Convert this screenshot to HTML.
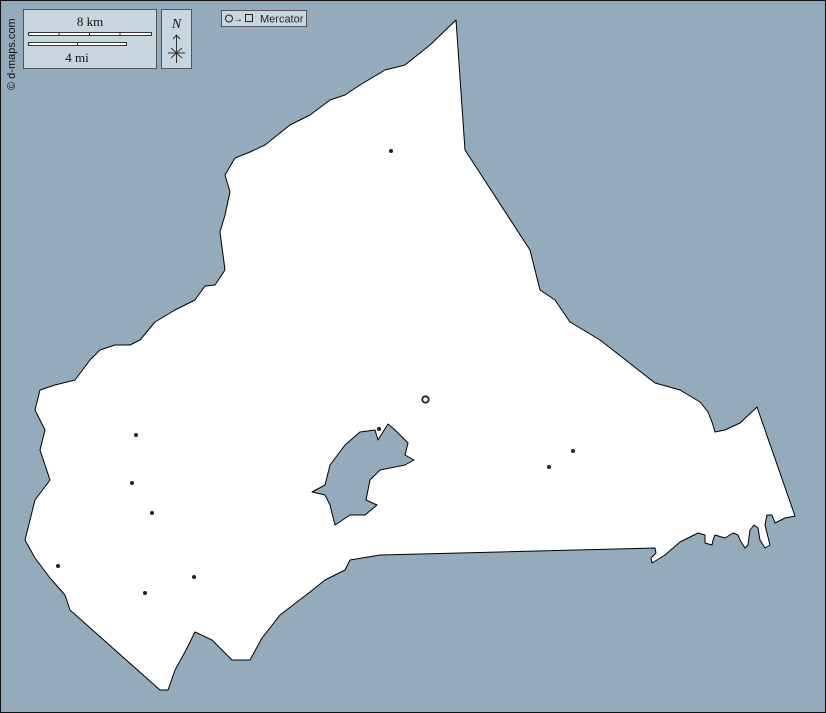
<!DOCTYPE html>
<html><head><meta charset="utf-8"><style>
html,body{margin:0;padding:0;width:826px;height:713px;overflow:hidden;background:#94abbb}
svg{display:block}
</style></head><body>
<svg width="826" height="713" viewBox="0 0 826 713" xmlns="http://www.w3.org/2000/svg">
<rect x="0.5" y="0.5" width="825" height="712" fill="#94abbb" stroke="#111" stroke-width="1"/>
<path fill="#fff" stroke="#000" stroke-width="1" stroke-linejoin="round" d="M456,20 L465,150 L530,250 L535,270 L540,290 L555,300 L570,322 L600,340 L655,383 L680,390 L700,402 L708,412 L712,422 L715,432 L725,430 L740,423 L757,407 L795,516 L785,518 L775,523 L772,515 L767,515 L765,525 L770,545 L765,548 L760,540 L758,528 L754,525 L750,530 L748,545 L745,548 L740,540 L738,535 L733,533 L725,538 L715,535 L713,540 L712,545 L705,543 L705,535 L698,533 L680,542 L665,555 L652,563 L651,558 L656,553 L655,548 L380,555 L350,560 L345,570 L325,580 L310,592 L280,615 L262,638 L250,660 L232,660 L212,640 L195,632 L185,652 L175,670 L168,690 L160,690 L70,610 L65,595 L50,578 L35,558 L25,540 L30,520 L35,500 L50,480 L45,465 L40,450 L45,430 L35,410 L40,390 L55,385 L75,380 L90,360 L100,350 L115,345 L130,345 L140,340 L155,322 L175,310 L195,300 L205,286 L215,285 L225,270 L220,232 L225,215 L230,192 L225,175 L235,158 L250,152 L265,145 L290,125 L310,115 L330,100 L345,95 L360,85 L385,70 L405,65 L430,45 Z"/>
<path fill="#94abbb" stroke="#000" stroke-width="1" stroke-linejoin="round" d="M312,492 L325,485 L330,465 L345,445 L360,432 L375,430 L378,440 L383,432 L388,424 L395,430 L408,443 L405,455 L414,460 L405,465 L395,467 L380,470 L370,480 L366,500 L377,505 L365,515 L350,515 L335,525 L330,505 L325,495 Z"/>
<g fill="#222">
<circle cx="391" cy="151" r="2"/><circle cx="136" cy="435" r="2"/><circle cx="132" cy="483" r="2"/><circle cx="152" cy="513" r="2"/><circle cx="58" cy="566" r="2"/><circle cx="145" cy="593" r="2"/><circle cx="194" cy="577" r="2"/><circle cx="379" cy="429" r="2"/><circle cx="549" cy="467" r="2"/><circle cx="573" cy="451" r="2"/>
</g>
<circle cx="425.5" cy="399.5" r="3.2" fill="none" stroke="#222" stroke-width="1.8"/>
<text x="15" y="90" transform="rotate(-90 15 90)" font-family="Liberation Sans,sans-serif" font-size="11" fill="#111">© d-maps.com</text>
<rect x="23.5" y="9.5" width="133" height="59" fill="#c8d6e0" stroke="#555"/>
<text x="90" y="26" text-anchor="middle" font-family="Liberation Serif,serif" font-size="13" fill="#111">8 km</text>
<rect x="28.5" y="32.5" width="123" height="3" fill="#fff" stroke="#333"/>
<g stroke="#333"><line x1="59" y1="32" x2="59" y2="36"/><line x1="89.5" y1="32" x2="89.5" y2="36"/><line x1="120" y1="32" x2="120" y2="36"/></g>
<rect x="28.5" y="42.5" width="98" height="3" fill="#fff" stroke="#333"/>
<line x1="77.5" y1="42" x2="77.5" y2="46" stroke="#333"/>
<text x="77" y="62" text-anchor="middle" font-family="Liberation Serif,serif" font-size="13" fill="#111">4 mi</text>
<rect x="161.5" y="9.5" width="30" height="59" fill="#c8d6e0" stroke="#555"/>
<text x="176.5" y="28" text-anchor="middle" font-family="Liberation Serif,serif" font-style="italic" font-size="14" fill="#111">N</text>
<g stroke="#333" fill="none"><line x1="176.5" y1="35" x2="176.5" y2="63"/><path d="M173,39 L176.5,35 L180,39"/><line x1="168" y1="53" x2="185" y2="53"/><line x1="171" y1="48" x2="182" y2="58"/><line x1="182" y1="48" x2="171" y2="58"/></g>
<rect x="221.5" y="10.5" width="85" height="16" fill="#c8d6e0" stroke="#555"/>
<circle cx="229" cy="18.5" r="3.5" fill="none" stroke="#222"/>
<text x="233" y="22" font-family="Liberation Sans,sans-serif" font-size="10" fill="#222">→</text>
<rect x="245.5" y="14.5" width="7" height="7" fill="none" stroke="#222"/>
<text x="260" y="22.5" font-family="Liberation Sans,sans-serif" font-size="11" fill="#222">Mercator</text>
</svg>
</body></html>
